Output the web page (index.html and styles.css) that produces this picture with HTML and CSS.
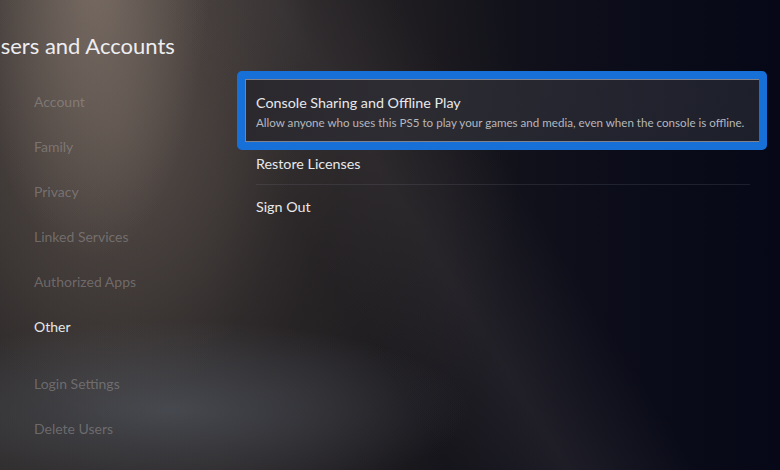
FILE: index.html
```html
<!DOCTYPE html>
<html lang="en">
<head>
<meta charset="utf-8">
<title>Users and Accounts</title>
<link rel="stylesheet" href="styles.css">
</head>
<body>
<div class="screen">
  <aside class="sidebar">
    <h1 class="page-title">Users and Accounts</h1>
    <nav class="nav">
      <div class="nav-group">
        <div class="nav-item">Account</div>
        <div class="nav-item">Family</div>
        <div class="nav-item">Privacy</div>
        <div class="nav-item">Linked Services</div>
        <div class="nav-item">Authorized Apps</div>
        <div class="nav-item active">Other</div>
      </div>
      <div class="nav-group">
        <div class="nav-item">Login Settings</div>
        <div class="nav-item">Delete Users</div>
      </div>
    </nav>
  </aside>
  <main class="content">
    <div class="list">
      <div class="row focused">
        <div class="row-title">Console Sharing and Offline Play</div>
        <div class="row-desc">Allow anyone who uses this PS5 to play your games and media, even when the console is offline.</div>
      </div>
      <div class="row">
        <div class="row-title">Restore Licenses</div>
      </div>
      <div class="row last">
        <div class="row-title">Sign Out</div>
      </div>
    </div>
  </main>
</div>
</body>
</html>
```
FILE: styles.css
```css
* { box-sizing: border-box; }
html, body {
  margin: 0;
  padding: 0;
  width: 780px;
  height: 470px;
  overflow: hidden;
  background: #0b0c16;
}
.screen {
  width: 780px;
  height: 470px;
  display: grid;
  grid-template-columns: 245px 515px;
  font-family: Lato, "Noto Sans", sans-serif;
  color: #e6e6e8;
  overflow: hidden;
  background:
    radial-gradient(ellipse 120px 300px at 90px -40px, rgba(165,148,135,0.45), rgba(0,0,0,0) 100%),
    radial-gradient(ellipse 200px 420px at 110px 0px, rgba(130,115,105,0.35), rgba(0,0,0,0) 100%),
    radial-gradient(ellipse 300px 90px at 170px 410px, rgba(95,104,116,0.5), rgba(0,0,0,0) 100%),
    linear-gradient(58deg, rgba(0,0,0,0) 42%, rgba(78,72,76,0.25) 53%, rgba(0,0,0,0) 65%),
    radial-gradient(ellipse 400px 560px at 120px 130px, rgba(78,70,66,0.8), rgba(48,43,43,0.45) 55%, rgba(0,0,0,0) 100%),
    linear-gradient(90deg, #2d2a2a 0%, #262325 28%, #18171c 52%, #0d0e1a 75%, #070817 100%);
}
.sidebar {
  display: flex;
  flex-direction: column;
  overflow: hidden;
}
.page-title {
  margin: 30px 0 0 -15px;
  font-size: 22px;
  line-height: 32px;
  font-weight: 400;
  color: #eeeef0;
  white-space: nowrap;
}
.nav {
  margin-top: 17px;
  padding-left: 34px;
  display: flex;
  flex-direction: column;
  gap: 12px;
}
.nav-item {
  height: 45px;
  line-height: 45px;
  font-size: 14px;
  color: rgba(170,166,166,0.45);
  white-space: nowrap;
}
.nav-item.active {
  color: #e6e6e8;
}
.content {
  padding-top: 79px;
}
.list {
  display: flex;
  flex-direction: column;
}
.row {
  position: relative;
  padding: 0 11px;
  height: 43px;
  display: flex;
  flex-direction: column;
  justify-content: center;
}
.row::after {
  content: "";
  position: absolute;
  left: 11px;
  right: 10px;
  bottom: 0;
  height: 1px;
  background: rgba(120,122,135,0.2);
}
.row.last::after { display: none; }
.row.focused {
  height: 63px;
  justify-content: flex-start;
  padding-top: 13px;
  border: 1px solid #80828d;
  background: linear-gradient(100deg, #2b292e 0%, #2d2c32 30%, #24252f 65%, #1d1f2b 100%);
  padding-left: 10px;
}
.row.focused::after { display: none; }
.row.focused::before {
  content: "";
  position: absolute;
  top: -9px;
  left: -9px;
  right: -8px;
  bottom: -9px;
  border: 8px solid #1670d8;
  border-radius: 5px;
  pointer-events: none;
}
.row-title {
  font-size: 14.3px;
  line-height: 20px;
  color: #e8e8ea;
  white-space: nowrap;
}
.row-desc {
  margin-top: 2px;
  font-size: 11.6px;
  line-height: 16px;
  color: #b6b7bd;
  white-space: nowrap;
}
```
